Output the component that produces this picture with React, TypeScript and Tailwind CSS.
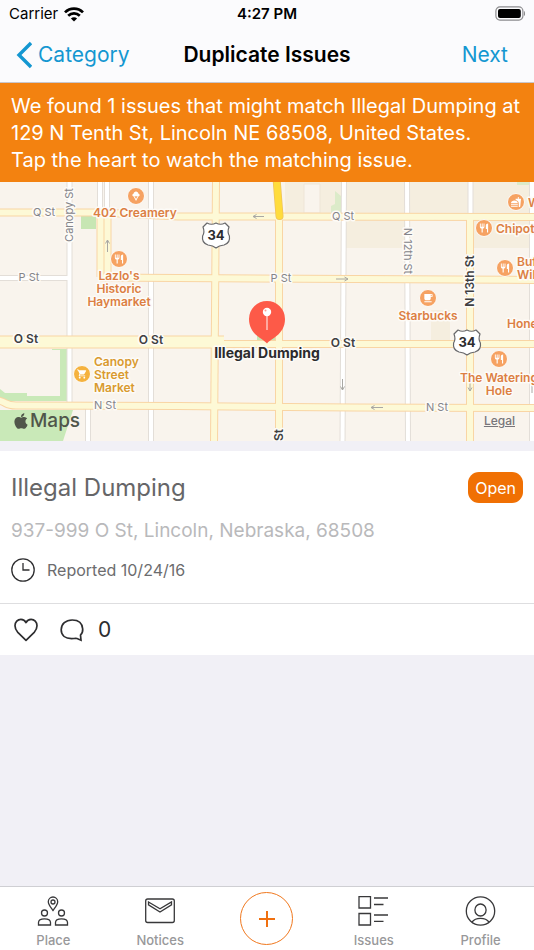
import type { ReactNode } from "react";
import type { IconType } from "react-icons";
import { FaApple } from "react-icons/fa";
import { MdFastfood, MdIcecream, MdLocalCafe, MdRestaurant, MdShoppingCart } from "react-icons/md";

function StatusBar() {
  return (
    <div className="grid h-7 grid-cols-3 items-center px-[9px] text-[15px] leading-5 text-black">
      <div className="flex items-center gap-[6px]">
        <span>Carrier</span>
        <svg className="h-[15px] w-5" viewBox="0 0 20 15" fill="none" stroke="currentColor" strokeWidth="2.7" aria-label="Wi-Fi">
          <path d="M1 5.4C6 .4 14 .4 19 5.4" />
          <path d="M4.2 8.8c3.3-3.2 8.3-3.2 11.6 0" />
          <path d="M10 14.6 6.9 11.5c1.8-1.7 4.4-1.7 6.2 0Z" fill="currentColor" stroke="none" />
        </svg>
      </div>
      <span className="text-center font-semibold">4:27 PM</span>
      <svg className="-mt-[2px] h-[15px] w-8 justify-self-end" viewBox="0 0 32 15" aria-label="Battery full">
        <rect x="2.900" y=".9" width="27" height="13.2" rx="4" fill="none" stroke="#8c8c8e" strokeWidth="1.2" />
        <rect x="5" y="3" width="22.800" height="9" rx="2" />
        <path d="M31 5c1.500 .8 1.500 4.200 0 5Z" fill="#8c8c8e" />
      </svg>
    </div>
  );
}

function NavBar() {
  return (
    <header className="border-b border-[#c9c6cb] bg-[#fbfbfd]">
      <StatusBar />
      <div className="grid h-[54px] grid-cols-[1fr_auto_1fr] items-center text-[21px] leading-7">
        <button type="button" className="flex items-center gap-[6px] pl-4 text-[#1497d1]">
          <svg className="h-7 w-4" viewBox="0 0 16 28" fill="none" stroke="currentColor" strokeWidth="3.4" aria-hidden="true">
            <path d="M15 2 3 14l12 12" strokeLinejoin="miter" />
          </svg>
          Category
        </button>
        <h1 className="font-semibold text-black">Duplicate Issues</h1>
        <button type="button" className="justify-self-end pr-[26px] text-[#1497d1]">Next</button>
      </div>
    </header>
  );
}

const ROADS = {
  white: [
    "M0 278H70", "M69.500 180V404", "M100 180V212", "M107 180V212", "M151 180V445", "M88 408V445",
    "M344 180L342.500 445", "M407 180L408 445", "M470.500 180V216", "M532 180V445",
  ],
  yellow: [
    "M0 212.500H100L178 216.500 534 217", "M100.500 213V277", "M107.500 213V277",
    "M100 277.500 178 278 354 279 534 280", "M216 180L214 445", "M279 216V445",
    "M470 217V445", "M222 344H534", "M-4 400C8 402 4 405.500 16 405.500L178 406 354 407.500 534 408",
  ],
};

type LabelProps = { x: number; y: number; lines: string[]; tone: "street" | "major" | "food" | "shop" | "pin"; anchor?: "start" | "middle"; rotate?: number };

const TONES = {
  street: "fill-[#85858a] text-[11px]",
  major: "fill-[#3f3f42] text-[12px] font-semibold",
  food: "fill-[#dc7f43] text-[12px] font-semibold",
  shop: "fill-[#d99a2f] text-[12px] font-semibold",
  pin: "fill-[#2b2b2d] text-[14px] font-bold",
};

function MapLabel({ x, y, lines, tone, anchor = "middle", rotate }: LabelProps) {
  return (
    <text
      x={x}
      y={y}
      textAnchor={anchor}
      transform={rotate ? `rotate(${rotate} ${x} ${y})` : undefined}
      className={`stroke-[#fdfbf7] stroke-3 [paint-order:stroke] [stroke-linejoin:round] ${TONES[tone]}`}
    >
      {lines.map((line, i) => (
        <tspan key={line} x={x} dy={i ? 13 : 0}>{line}</tspan>
      ))}
    </text>
  );
}

function Poi({ x, y, icon: Icon, fill = "#f6a262" }: { x: number; y: number; icon: IconType; fill?: string }) {
  return (
    <g>
      <circle cx={x} cy={y} r="8.500" fill={fill} stroke="#fdfbf7" />
      <Icon x={x - 5.5} y={y - 5.5} size={11} color="#fff" />
    </g>
  );
}

function Shield({ x, y }: { x: number; y: number }) {
  return (
    <g transform={`translate(${x} ${y})`}>
      <path
        d="M-9-12Q-4.500-9.500 0-12Q4.500-9.500 9-12L13-8Q11-3 13.400 1Q14.500 8 8 10Q3 10.500 0 13Q-3 10.500-8 10Q-14.500 8-13.400 1Q-11-3-13-8Z"
        fill="#fff"
        stroke="#68686b"
        strokeWidth="1.2"
        strokeLinejoin="round"
      />
      <text y="4.500" textAnchor="middle" className="fill-[#2d2d2f] text-[13px] font-bold">34</text>
    </g>
  );
}

function IssueMap() {
  return (
    <section className="relative h-[259px] overflow-hidden bg-[#f9f4ed]" aria-label="Map">
      <svg className="h-full w-full" viewBox="0 182 534 259" preserveAspectRatio="xMidYMid slice">
        <path d="M285 180H532V216H285ZM344 217H407V248H344ZM470 217H532V248H470ZM431 310H450V340H431Z" fill="#f5eedf" />
        <path d="M304 184H320V213H304Z" fill="#f9f4ed" stroke="#eee5d7" />
        <path d="M81 216H96V229H81ZM257 335H275V341H257Z" fill="#c7e6b3" />
        <path d="M331 213V206L335 204V191L341 196V213ZM517 180H531V185H517Z" fill="#dcebc9" />
        <path d="M52 349H67V401H0V389L5 393H27V396H60V350H52ZM0 410H73L63 441H0Z" fill="#c9e9b8" />

        <g fill="none">
          <g stroke="#e3ded8" strokeWidth="6">{ROADS.white.map((d) => <path key={d} d={d} />)}</g>
          <g stroke="#fff" strokeWidth="4">{ROADS.white.map((d) => <path key={d} d={d} />)}</g>
          <g stroke="#f9d5a4" strokeWidth="8">{ROADS.yellow.map((d) => <path key={d} d={d} />)}</g>
          <path d="M0 342H224" stroke="#f9d5a4" strokeWidth="13" />
          <g stroke="#fdf9d6" strokeWidth="6">{ROADS.yellow.map((d) => <path key={d} d={d} />)}</g>
          <path d="M0 342H224" stroke="#fdf9d6" strokeWidth="11" />
          <path d="M276.500 178L279.500 216" stroke="#eec25c" strokeWidth="8" strokeLinecap="round" />
          <path d="M276.500 178L279.500 216" stroke="#ffdc3c" strokeWidth="6.500" strokeLinecap="round" />
          <g stroke="#a9a8a4" strokeWidth="1">
            <path d="M264 216.500H253M256.500 214.500 253 216.500 256.500 218.500" />
            <path d="M336 279H348M344.500 277 348 279 344.500 281" />
            <path d="M383 407.500H371M374.500 405.500 371 407.500 374.500 409.500" />
            <path d="M107.500 252V240M105.500 243.500 107.500 240 109.500 243.500" />
            <path d="M342.500 379V390M340.500 386.500 342.500 390 344.500 386.500" />
            <path d="M470 383V391M468 387.500 470 391 472 387.500" />
            <path d="M532 385V393" />
          </g>
        </g>

        <MapLabel x={44} y={216} lines={["Q St"]} tone="street" />
        <MapLabel x={343} y={220} lines={["Q St"]} tone="street" />
        <MapLabel x={29} y={281} lines={["P St"]} tone="street" />
        <MapLabel x={281} y={282} lines={["P St"]} tone="street" />
        <MapLabel x={105} y={409} lines={["N St"]} tone="street" />
        <MapLabel x={437} y={411} lines={["N St"]} tone="street" />
        <MapLabel x={73} y={215} lines={["Canopy St"]} tone="street" rotate={-90} />
        <MapLabel x={404} y={251} lines={["N 12th St"]} tone="street" rotate={90} />
        <MapLabel x={474} y={281} lines={["N 13th St"]} tone="major" rotate={-90} />
        <MapLabel x={283} y={435} lines={["St"]} tone="major" rotate={-90} />
        <MapLabel x={26} y={343} lines={["O St"]} tone="major" />
        <MapLabel x={151} y={344} lines={["O St"]} tone="major" />
        <MapLabel x={343} y={347} lines={["O St"]} tone="major" />

        <MapLabel x={135} y={217} lines={["402 Creamery"]} tone="food" />
        <MapLabel x={119} y={280} lines={["Lazlo's", "Historic", "Haymarket"]} tone="food" />
        <MapLabel x={428} y={320} lines={["Starbucks"]} tone="food" />
        <MapLabel x={499} y={382} lines={["The Watering", "Hole"]} tone="food" />
        <MapLabel x={496} y={233} lines={["Chipot"]} tone="food" anchor="start" />
        <MapLabel x={528} y={207} lines={["W"]} tone="food" anchor="start" />
        <MapLabel x={517} y={266} lines={["Buf", "Wil"]} tone="food" anchor="start" />
        <MapLabel x={507} y={328} lines={["Hone"]} tone="food" anchor="start" />
        <MapLabel x={94} y={366} lines={["Canopy", "Street", "Market"]} tone="shop" anchor="start" />

        <Poi x={136} y={196} icon={MdIcecream} />
        <Poi x={119} y={259} icon={MdRestaurant} />
        <Poi x={516} y={202} icon={MdFastfood} />
        <Poi x={484} y={228} icon={MdRestaurant} />
        <Poi x={505} y={268} icon={MdRestaurant} />
        <Poi x={428} y={298} icon={MdLocalCafe} />
        <Poi x={499} y={359} icon={MdRestaurant} />
        <Poi x={82} y={374} icon={MdShoppingCart} fill="#f5b23e" />
        <Shield x={216} y={235} />
        <Shield x={467} y={342} />

        <path d="M267 343.500C264 339 249 335 249 319A18 18 0 0 1 285 319C285 335 270 339 267 343.500Z" fill="#fd5a48" />
        <path d="M267 314V330" stroke="#ffd6d0" strokeWidth="1.300" />
        <circle cx="267" cy="312" r="4.200" fill="#fff" />
        <circle cx="265.500" cy="310.500" r="1" fill="#fd9c91" />
        <MapLabel x={267} y={358} lines={["Illegal Dumping"]} tone="pin" />
      </svg>
      <div className="absolute bottom-2 left-3 flex items-center text-[19px] leading-6 font-medium text-[#50564a]">
        <FaApple size={18} aria-hidden="true" />
        Maps
      </div>
      <a href="#legal" className="absolute right-[19px] bottom-[12px] text-[12px] leading-4 font-medium text-[#77757a] underline">Legal</a>
    </section>
  );
}

function IssueCard() {
  return (
    <article className="mt-[10px] bg-white">
      <div className="border-b border-[#dedee0] px-[11px] pt-[21px] pb-[21px]">
        <div className="flex items-center justify-between">
          <h2 className="text-[24px] leading-[31px] text-[#666668]">Illegal Dumping</h2>
          <span className="flex h-[31px] items-center rounded-[11px] bg-[#f07003] px-[7px] text-[16px] leading-5 text-white">Open</span>
        </div>
        <p className="mt-[14px] text-[19px] leading-7 text-[#b9b9bb]">937-999 O St, Lincoln, Nebraska, 68508</p>
        <div className="mt-[13px] flex items-center gap-3 text-[16px] leading-6 text-[#6c6c6e]">
          <svg className="size-6" viewBox="0 0 24 24" fill="none" stroke="#2f2f31" strokeWidth="1.300" aria-hidden="true">
            <circle cx="12" cy="12" r="11.200" />
            <path d="M12 5v7h6.500" />
          </svg>
          Reported 10/24/16
        </div>
      </div>
      <div className="flex h-[51px] items-center gap-[22px] px-[14px] text-[#2d2d2f]">
        <button type="button" aria-label="Watch issue">
          <svg className="size-6" viewBox="0 0 24 24" fill="none" stroke="currentColor" strokeWidth="1.700" strokeLinejoin="round">
            <path d="M12 22.300 3.800 14.300C1.800 12.200 1 10.200 1 7.800 1 4 3.700 1.300 6.900 1.300 9.200 1.300 11 2.600 12 4.600 13 2.600 14.800 1.300 17.100 1.300 20.300 1.300 23 4 23 7.800 23 10.200 22.200 12.200 20.200 14.300Z" />
          </svg>
        </button>
        <button type="button" className="flex items-center gap-[14px] text-[21px] leading-7" aria-label="0 comments">
          <svg className="size-6" viewBox="0 0 24 24" fill="none" stroke="currentColor" strokeWidth="1.700">
            <path d="M20.500 17C22.300 15.300 22.900 13.500 22.700 11 22.300 5 18 2 12.200 2 5.800 2 1.200 6 1.200 11.800 1.200 17.500 5.500 20.600 11.500 20.600 13.800 20.600 15.500 20.200 17 20.500L21 22.200Z" strokeLinejoin="miter" />
          </svg>
          0
        </button>
      </div>
    </article>
  );
}

function TabIcon({ children }: { children: ReactNode }) {
  return (
    <svg className="size-8" viewBox="0 0 32 32" fill="none" stroke="#38383a" strokeWidth="1.300" aria-hidden="true">
      {children}
    </svg>
  );
}

function Tab({ label, children }: { label: string; children: ReactNode }) {
  return (
    <button type="button" className="flex flex-1 flex-col items-center gap-[5px] pt-2 text-[13px] leading-4 font-medium text-[#98989a]">
      <TabIcon>{children}</TabIcon>
      {label}
    </button>
  );
}

function TabBar() {
  return (
    <nav className="mt-auto flex h-16 border-t border-[#cfcfd3] bg-white">
      <Tab label="Place">
        <path d="M16 15.500C13.500 12 11.300 9.500 11.300 6.700a4.700 4.700 0 0 1 9.400 0C20.700 9.500 18.500 12 16 15.500Z" />
        <circle cx="16" cy="7" r="2" />
        <circle cx="7.500" cy="18" r="3" />
        <circle cx="24.500" cy="18" r="3" />
        <path d="M1.500 30v-2.500C1.500 25 3.500 23.800 7.500 23.800S13.500 25 13.500 27.500V30ZM18.500 30v-2.500c0-2.500 2-3.700 6-3.700s6 1.200 6 3.700V30Z" />
      </Tab>
      <Tab label="Notices">
        <rect x="1.700" y="4" width="28.600" height="23.500" rx="2" />
        <path d="M4.500 7 16 13.800 27.500 7V9.800L16 17 4.500 9.800Z" />
      </Tab>
      <div className="flex flex-1 justify-center pt-[5px]">
        <button type="button" className="flex size-[53px] items-center justify-center rounded-full border border-[#f0781e] text-[#f07010]" aria-label="Report issue">
          <svg className="size-4" viewBox="0 0 16 16" stroke="currentColor" strokeWidth="2" aria-hidden="true">
            <path d="M8 0V16M0 8H16" />
          </svg>
        </button>
      </div>
      <Tab label="Issues">
        <path d="M1 1.700H12.500V13H1ZM1 18.500H12.500V30H1ZM16 3H30M16 9.500H25.500M16 20H30M16 26.300H25.500" />
      </Tab>
      <Tab label="Profile">
        <circle cx="15.500" cy="16" r="14.200" />
        <ellipse cx="15.500" cy="15" rx="5.600" ry="6" />
        <path d="M7 27C9 24.300 12 23.300 15.500 23.300S22 24.300 24 27" />
      </Tab>
    </nav>
  );
}

export default function App() {
  return (
    <div className="flex min-h-screen flex-col bg-[#f1f0f6] font-[Inter,'Liberation_Sans',sans-serif]">
      <NavBar />
      <p className="bg-[#f38210] px-[11px] pt-[10px] pb-2 text-[20px] leading-[27px] text-white">
        We found 1 issues that might match Illegal Dumping at 129 N Tenth St, Lincoln NE 68508, United States.
        <br />
        Tap the heart to watch the matching issue.
      </p>
      <IssueMap />
      <IssueCard />
      <TabBar />
    </div>
  );
}
